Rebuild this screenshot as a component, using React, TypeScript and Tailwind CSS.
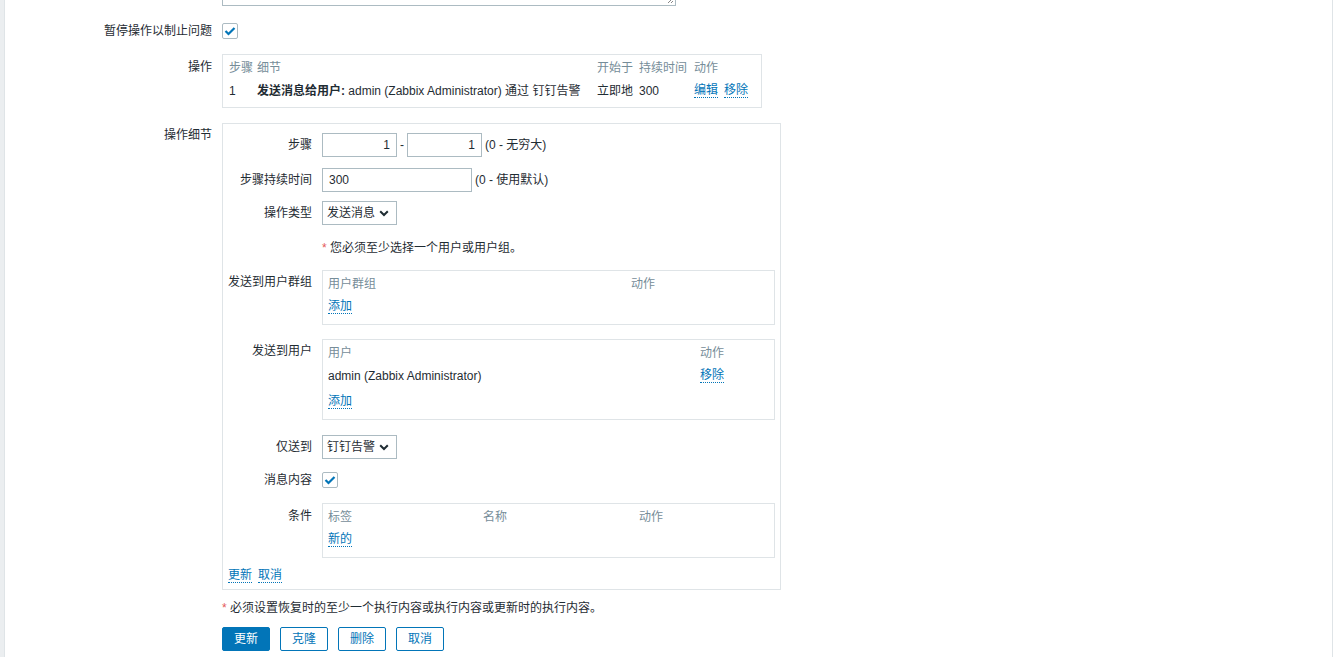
// Zabbix action operation form - recovered from screenshot

import type { ReactNode } from 'react';

const FONT = { fontFamily: '"Liberation Sans", Arial, "Noto Sans CJK SC", sans-serif' };

function Check() {
  return (
    <span className="flex-shrink-0 flex items-center justify-center w-[16px] h-[16px] border border-[#acbbc2] bg-white rounded-[2px]">
      <svg width="12" height="10" viewBox="0 0 12 10">
        <path d="M1.5 5 L4.5 8 L10.5 2" fill="none" stroke="#0275b8" strokeWidth="2.2" />
      </svg>
    </span>
  );
}

function Link({ children }: { children: ReactNode }) {
  return (
    <span className="text-[#0275b8] border-b border-dotted border-[#0275b8] leading-[13px] inline-block cursor-pointer">
      {children}
    </span>
  );
}

function Select({ value, width }: { value: string; width: string }) {
  return (
    <div className={`flex items-center justify-between h-[24px] border border-[#acbbc2] bg-white pl-[4px] pr-[7px] ${width}`}>
      <span>{value}</span>
      <svg width="10" height="7" viewBox="0 0 10 7">
        <path d="M1.2 1.2 L5 5 L8.8 1.2" fill="none" stroke="#1f2c33" strokeWidth="2" />
      </svg>
    </div>
  );
}

function Input({ value, className }: { value: string; className: string }) {
  return (
    <div className={`h-[24px] border border-[#acbbc2] bg-white flex items-center px-[6px] ${className}`}>
      {value}
    </div>
  );
}

function Header({ children }: { children: ReactNode }) {
  return <span className="text-[#768d99]">{children}</span>;
}

// inner row of the operation details box
function DetailRow({ label, children, className = '', labelClass = 'items-center' }: {
  label?: string;
  children: ReactNode;
  className?: string;
  labelClass?: string;
}) {
  return (
    <div className={`flex ${className}`}>
      <div className={`w-[89px] flex-shrink-0 flex justify-end ${labelClass}`}>
        <span className="whitespace-nowrap">{label}</span>
      </div>
      <div className="ml-[10px] flex-1 flex items-center">{children}</div>
    </div>
  );
}

function Box({ children, className = '' }: { children: ReactNode; className?: string }) {
  return <div className={`border border-[#dfe4e7] pt-[1px] pb-[6px] pl-[5px] ${className}`}>{children}</div>;
}

export default function App() {
  return (
    <div className="h-[657px] overflow-hidden bg-[#ebeef0] text-[12px] leading-[14px] text-[#1f2c33]" style={FONT}>
      <div className="ml-[4px] h-full bg-white border-x border-[#dfe4e7]">
        {/* textarea tail */}
        <div className="flex">
          <div className="w-[207px]" />
          <div className="ml-[10px] h-[6px] overflow-hidden relative w-[454px]">
            <div className="absolute bottom-0 left-0 right-0 h-[40px] border border-[#acbbc2] bg-white">
              <svg className="absolute right-[1px] bottom-[1px]" width="7" height="7" viewBox="0 0 7 7">
                <path d="M6 1 L1 6 M6 4 L4 6" stroke="#888" strokeWidth="1" />
              </svg>
            </div>
          </div>
        </div>

        {/* pause operations */}
        <div className="flex items-center mt-[17px]">
          <div className="w-[207px] text-right">暂停操作以制止问题</div>
          <div className="ml-[10px]">
            <Check />
          </div>
        </div>

        {/* operations */}
        <div className="flex mt-[15px]">
          <div className="w-[207px] text-right pt-[6px]">操作</div>
          <div className="ml-[10px] w-[540px] border border-[#dfe4e7] pt-[1px] pb-[5px] pl-[6px]">
            <div className="grid grid-cols-[28px_340px_42px_55px_1fr] h-[23px] items-center">
              <Header>步骤</Header>
              <Header>细节</Header>
              <Header>开始于</Header>
              <Header>持续时间</Header>
              <Header>动作</Header>
            </div>
            <div className="grid grid-cols-[28px_340px_42px_55px_1fr] h-[23px] items-center">
              <span>1</span>
              <span className="whitespace-nowrap">
                <b>发送消息给用户:</b> admin (Zabbix Administrator) 通过 钉钉告警
              </span>
              <span>立即地</span>
              <span>300</span>
              <span className="flex gap-[6px]">
                <Link>编辑</Link>
                <Link>移除</Link>
              </span>
            </div>
          </div>
        </div>

        {/* operation details */}
        <div className="flex mt-[15px]">
          <div className="w-[207px] text-right pt-[5px]">操作细节</div>
          <div className="ml-[10px] w-[559px] border border-[#dfe4e7] pt-[9px] pb-[6px]">
            <DetailRow label="步骤">
              <Input value="1" className="w-[75px] justify-end" />
              <span className="mx-[3px]">-</span>
              <Input value="1" className="w-[75px] justify-end" />
              <span className="ml-[3px]">(0 - 无穷大)</span>
            </DetailRow>
            <DetailRow label="步骤持续时间" className="mt-[11px]">
              <Input value="300" className="w-[150px]" />
              <span className="ml-[3px]">(0 - 使用默认)</span>
            </DetailRow>
            <DetailRow label="操作类型" className="mt-[9px]">
              <Select value="发送消息" width="w-[75px]" />
            </DetailRow>
            <DetailRow className="mt-[16px]">
              <span>
                <span className="text-[#e45959]">*</span> 您必须至少选择一个用户或用户组。
              </span>
            </DetailRow>

            <DetailRow label="发送到用户群组" className="mt-[15px]" labelClass="pt-[5px]">
              <Box className="w-[453px]">
                <div className="grid grid-cols-[303px_1fr] h-[23px] items-center">
                  <Header>用户群组</Header>
                  <Header>动作</Header>
                </div>
                <div className="h-[23px] flex items-center">
                  <Link>添加</Link>
                </div>
              </Box>
            </DetailRow>

            <DetailRow label="发送到用户" className="mt-[14px]" labelClass="pt-[5px]">
              <Box className="w-[453px]">
                <div className="grid grid-cols-[372px_1fr] h-[23px] items-center">
                  <Header>用户</Header>
                  <Header>动作</Header>
                </div>
                <div className="grid grid-cols-[372px_1fr] h-[23px] items-center">
                  <span>admin (Zabbix Administrator)</span>
                  <span>
                    <Link>移除</Link>
                  </span>
                </div>
                <div className="h-[23px] flex items-center mt-[3px]">
                  <Link>添加</Link>
                </div>
              </Box>
            </DetailRow>

            <DetailRow label="仅送到" className="mt-[15px]">
              <Select value="钉钉告警" width="w-[75px]" />
            </DetailRow>

            <DetailRow label="消息内容" className="mt-[13px]">
              <Check />
            </DetailRow>

            <DetailRow label="条件" className="mt-[15px]" labelClass="pt-[6px]">
              <Box className="w-[453px]">
                <div className="grid grid-cols-[155px_156px_1fr] h-[23px] items-center">
                  <Header>标签</Header>
                  <Header>名称</Header>
                  <Header>动作</Header>
                </div>
                <div className="h-[23px] flex items-center">
                  <Link>新的</Link>
                </div>
              </Box>
            </DetailRow>

            <div className="mt-[11px] pl-[5px] flex gap-[6px]">
              <Link>更新</Link>
              <Link>取消</Link>
            </div>
          </div>
        </div>

        {/* footer */}
        <div className="ml-[217px] mt-[11px]">
          <span className="text-[#e45959]">*</span> 必须设置恢复时的至少一个执行内容或执行内容或更新时的执行内容。
        </div>
        <div className="ml-[217px] mt-[12px] flex gap-[10px]">
          <button type="button" className="w-[48px] h-[24px] rounded-[2px] bg-[#0275b8] border border-[#0275b8] text-white">
            更新
          </button>
          {['克隆', '删除', '取消'].map((t) => (
            <button
              key={t}
              type="button"
              className="w-[48px] h-[24px] rounded-[2px] bg-white border border-[#0275b8] text-[#0275b8]"
            >
              {t}
            </button>
          ))}
        </div>
      </div>
    </div>
  );
}
